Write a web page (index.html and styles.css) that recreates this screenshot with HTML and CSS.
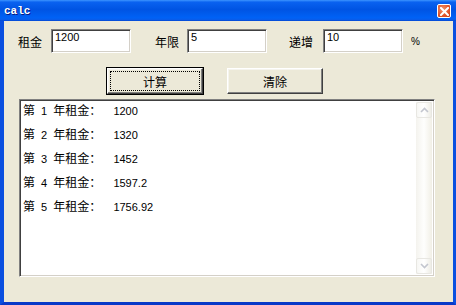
FILE: index.html
```html
<!DOCTYPE html>
<html lang="zh-CN">
<head>
  <meta charset="UTF-8" />
  <title>calc</title>
  <link rel="stylesheet" href="styles.css">
</head>
<body>

  <div class="window">
    <div class="titlebar">
      <span class="title">calc</span>
      <span class="close">
        <svg width="9" height="9" viewBox="0 0 9 9">
          <path d="M1 1 L8 8 M8 1 L1 8" stroke="#fff" stroke-width="2" stroke-linecap="square" />
        </svg>
      </span>
    </div>

    <div class="client">
      <div class="fields">
        <label class="lbl">租金</label>
        <div class="input">1200</div>
        <label class="lbl lbl-2">年限</label>
        <div class="input">5</div>
        <label class="lbl lbl-3">递增</label>
        <div class="input">10</div>
        <span class="pct">%</span>
      </div>

      <div class="actions">
        <button class="btn btn-default"><span class="focus">计算</span></button>
        <button class="btn">清除</button>
      </div>

      <div class="output">
        <div class="lines">
          <div class="line">第<span class="a"> 1 </span>年租金：<span class="a">  1200</span></div>
          <div class="line">第<span class="a"> 2 </span>年租金：<span class="a">  1320</span></div>
          <div class="line">第<span class="a"> 3 </span>年租金：<span class="a">  1452</span></div>
          <div class="line">第<span class="a"> 4 </span>年租金：<span class="a">  1597.2</span></div>
          <div class="line">第<span class="a"> 5 </span>年租金：<span class="a">  1756.92</span></div>
        </div>
        <div class="scrollbar">
          <div class="sb-btn">
            <svg width="9" height="6" viewBox="0 0 9 6"><path d="M1 5 L4.5 1.5 L8 5" fill="none" stroke="#c3c6cf" stroke-width="1.6" /></svg>
          </div>
          <div class="sb-track"></div>
          <div class="sb-btn">
            <svg width="9" height="6" viewBox="0 0 9 6"><path d="M1 1 L4.5 4.5 L8 1" fill="none" stroke="#c3c6cf" stroke-width="1.6" /></svg>
          </div>
        </div>
      </div>
    </div>
  </div>

</body>
</html>
```

FILE: styles.css
```css
:root {
  --face: #ece9d8;
  --frame: #0a4fe0;
  --cjk: "Noto Sans CJK SC", "Noto Sans", sans-serif;
}

* {
  box-sizing: border-box;
}

body {
  margin: 0;
  width: 456px;
  height: 305px;
  overflow: hidden;
  font-family: var(--cjk);
  font-size: 12px;
  color: #000;
}

.window {
  width: 456px;
  height: 305px;
  display: flex;
  flex-direction: column;
}

.titlebar {
  height: 21px;
  flex: none;
  display: flex;
  align-items: center;
  justify-content: space-between;
  padding: 0 5px 0 4px;
  background: linear-gradient(#3d95ff 0, #0a62f0 10%, #0054e3 45%, #0062f6 85%, #0a5be8 95%, #0043cf 100%);
}

.title {
  font-family: "Liberation Mono", monospace;
  font-weight: bold;
  font-size: 11px;
  color: #fff;
  text-shadow: 1px 1px #0a1a80;
  margin-top: 1px;
}

.close {
  width: 14px;
  height: 14px;
  margin-top: 1px;
  border: 1px solid #fff;
  border-radius: 2px;
  background: radial-gradient(circle at 40% 35%, #f0936b 0, #e2552a 60%, #c43b12 100%);
  display: flex;
  align-items: center;
  justify-content: center;
}

.client {
  flex: 1;
  background: var(--face);
  border-left: 4px solid var(--frame);
  border-right: 3px solid var(--frame);
  border-bottom: 3px solid #0839c8;
  padding: 8px 0 0 14px;
}

.fields {
  display: flex;
  align-items: center;
  height: 24px;
}

.lbl {
  width: 24px;
  margin-right: 9px;
  white-space: nowrap;
}

.lbl-2 {
  margin-left: 24px;
  margin-right: 8px;
}

.lbl-3 {
  margin-left: 22px;
  margin-right: 10px;
}

.input {
  width: 80px;
  height: 24px;
  background: #fff;
  border: 1px solid;
  border-color: #808080 #fff #fff #808080;
  box-shadow: inset 1px 1px #404040, inset -1px -1px #d4d0c8;
  font-family: "Liberation Sans", sans-serif;
  font-size: 11px;
  line-height: 13px;
  padding: 1px 0 0 3px;
}

.pct {
  margin-left: 8px;
  font-family: "Liberation Sans", sans-serif;
  font-size: 10px;
}

.actions {
  display: flex;
  gap: 24px;
  margin: 15px 0 0 89px;
}

.btn {
  width: 96px;
  height: 26px;
  padding: 0;
  background: var(--face);
  border: 1px solid;
  border-color: #fff #404040 #404040 #fff;
  box-shadow: inset -1px -1px #808080, inset 1px 1px #f5f4ee;
  font-family: var(--cjk);
  font-size: 12px;
  color: #000;
  display: flex;
  align-items: center;
  justify-content: center;
}

.btn-default {
  outline: 1px solid #000;
  outline-offset: 0;
  padding: 2px;
}

.focus {
  width: 100%;
  height: 100%;
  border: 1px dotted #000;
  display: flex;
  align-items: center;
  justify-content: center;
}

.output {
  width: 416px;
  height: 178px;
  margin: 5px 0 0 1px;
  background: #fff;
  border: 1px solid;
  border-color: #808080 #fff #fff #808080;
  box-shadow: inset 1px 1px #404040, inset -1px -1px #d4d0c8;
  display: flex;
  padding: 2px;
}

.lines {
  flex: 1;
  display: flex;
  flex-direction: column;
  gap: 8px;
  padding: 0 0 0 1px;
}

.line {
  height: 16px;
  line-height: 16px;
  white-space: pre;
}

.a {
  font-family: "Liberation Sans", sans-serif;
  font-size: 11px;
  word-spacing: 3px;
}

.scrollbar {
  width: 16px;
  display: flex;
  flex-direction: column;
  background: linear-gradient(90deg, #f4f3ee, #fefefd 50%, #f1efe6);
}

.sb-btn {
  height: 16px;
  border: 1px solid #e8e7e2;
  border-radius: 2px;
  background: linear-gradient(90deg, #f7f7f4, #ffffff 50%, #eeede6);
  display: flex;
  align-items: center;
  justify-content: center;
}

.sb-track {
  flex: 1;
}
```
